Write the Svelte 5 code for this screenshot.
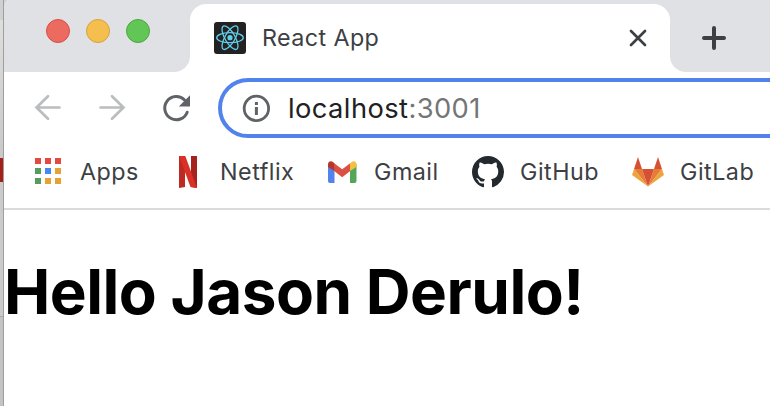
<script>
  const bookmarks = [
    { id: 'apps', label: 'Apps' },
    { id: 'netflix', label: 'Netflix' },
    { id: 'gmail', label: 'Gmail' },
    { id: 'github', label: 'GitHub' },
    { id: 'gitlab', label: 'GitLab' }
  ];
  const appColors = ['#e34a3f', '#e34a3f', '#e34a3f', '#559d5c', '#4688f1', '#e5a336', '#559d5c', '#e5a336', '#e5a336'];
</script>

<div class="screen">
  <div class="desktop">
    <span class="d1"></span><span class="d2"></span><span class="red"></span><span class="d3"></span><span class="d4"></span>
  </div>
  <div class="window">
    <header class="tabs">
      <div class="lights"><i class="close"></i><i class="min"></i><i class="max"></i></div>
      <div class="tab">
        <svg class="favicon" width="32" height="32" viewBox="0 0 32 32">
          <rect width="32" height="32" rx="3" fill="#222" />
          <g fill="none" stroke="#61cdec" stroke-width="1.3">
            <ellipse cx="16" cy="15.7" rx="13.3" ry="5" />
            <ellipse cx="16" cy="15.7" rx="13.3" ry="5" transform="rotate(60 16 15.7)" />
            <ellipse cx="16" cy="15.7" rx="13.3" ry="5" transform="rotate(120 16 15.7)" />
          </g>
          <circle cx="16" cy="15.7" r="2.6" fill="#61cdec" />
        </svg>
        <span class="title">React App</span>
        <svg class="x" width="20" height="20" viewBox="0 0 20 20"><path d="M3 3 17 17M17 3 3 17" stroke="#3c4043" stroke-width="2.7" stroke-linecap="round" /></svg>
      </div>
      <svg class="plus" width="26" height="26" viewBox="0 0 26 26"><path d="M13 3V23M3 13H23" stroke="#3c4043" stroke-width="4" stroke-linecap="round" /></svg>
    </header>
    <nav class="toolbar">
      <svg width="32" height="32" viewBox="0 0 32 32"><path d="M27.5 15.5H4.5M16 4.3 4.5 15.5 16 26.7" fill="none" stroke="#bbbcbe" stroke-width="2.7" stroke-linecap="round" /></svg>
      <svg width="32" height="32" viewBox="0 0 32 32"><path d="M4.5 15.5H27.5M16 4.3 27.5 15.5 16 26.7" fill="none" stroke="#bbbcbe" stroke-width="2.7" stroke-linecap="round" /></svg>
      <svg width="32" height="32" viewBox="0 0 32 32"><path d="M27.2 20.2A11.6 11.6 0 1 1 24.6 8" fill="none" stroke="#5f6368" stroke-width="3" stroke-linecap="round" /><path d="M30 3.2V14.4H18.8Z" fill="#5f6368" /></svg>
      <div class="address">
        <svg width="28" height="28" viewBox="0 0 28 28"><circle cx="14.4" cy="14.4" r="12.2" fill="none" stroke="#5f6368" stroke-width="2.8" /><path d="M12.9 8h3v3h-3zM12.9 13h3v8h-3z" fill="#5f6368" /></svg>
        <span class="url">localhost<span>:3001</span></span>
      </div>
    </nav>
    <div class="bookmarks">
      {#each bookmarks as b (b.id)}
        <div class="bookmark">
          <svg width="32" height="32" viewBox="0 0 32 32">
            {#if b.id === 'apps'}
              {#each appColors as color, i}
                <rect x={3 + (i % 3) * 10} y={2 + Math.floor(i / 3) * 10} width="6" height="6" fill={color} />
              {/each}
            {:else if b.id === 'netflix'}
              <path d="M7 0h6v31l-6 1z" fill="#bd2a22" />
              <path d="M19 0h6v32l-6-1z" fill="#a6231e" />
              <path d="M7 0h6.3L25 32l-6.5-1z" fill="#d93127" />
            {:else if b.id === 'gmail'}
              <path d="M2 8 8.5 12V27H4Q2 27 2 25Z" fill="#5282ec" />
              <path d="M24 12 30.5 8V25Q30.5 27 28.5 27H24Z" fill="#56a65a" />
              <path d="M8.2 7.3 16.2 13.2 24.2 7.3V15L16.2 21.2 8.2 15Z" fill="#db5040" />
              <path d="M2 11V8.2C2 5.5 5 4.2 7.2 6.2L8.5 7.5V15Z" fill="#b8352b" />
              <path d="M30.5 11V8.2C30.5 5.5 27.5 4.2 25.3 6.2L24 7.5V15Z" fill="#f2c042" />
            {:else if b.id === 'github'}
              <path transform="scale(2)" fill="#24292e" d="M8 0C3.58 0 0 3.58 0 8c0 3.54 2.29 6.53 5.47 7.59.4.07.55-.17.55-.38 0-.19-.01-.82-.01-1.49-2.01.37-2.53-.49-2.69-.94-.09-.23-.48-.94-.82-1.13-.28-.15-.68-.52-.01-.53.63-.01 1.08.58 1.23.82.72 1.21 1.87.87 2.33.66.07-.52.28-.87.51-1.07-1.78-.2-3.64-.89-3.64-3.95 0-.87.31-1.59.82-2.15-.08-.2-.36-1.02.08-2.12 0 0 .67-.21 2.2.82.64-.18 1.32-.27 2-.27s1.36.09 2 .27c1.53-1.04 2.2-.82 2.2-.82.44 1.1.16 1.92.08 2.12.51.56.82 1.27.82 2.15 0 3.07-1.87 3.75-3.65 3.95.29.25.54.73.54 1.48 0 1.07-.01 1.93-.01 2.2 0 .21.15.46.55.38A8.01 8.01 0 0 0 16 8c0-4.42-3.58-8-8-8Z" />
            {:else}
              <path d="M2 13 6 1 10 13ZM22 13 26 1 30 13Z" fill="#d65036" />
              <path d="M2 13H10L16 30.5ZM22 13H30L16 30.5Z" fill="#e87b35" />
              <path d="M2 13 0 19 16 30.5ZM30 13 32 19 16 30.5Z" fill="#eca43d" />
              <path d="M10 13H22L16 30.5Z" fill="#d65036" />
            {/if}
          </svg>
          <span>{b.label}</span>
        </div>
      {/each}
    </div>
    <main><h1>Hello Jason Derulo!</h1></main>
  </div>
</div>

<style>
  :global(body) { margin: 0; overflow: hidden; }
  .screen { width: 770px; height: 406px; display: flex; overflow: hidden; background: #d3d4d6; font-family: Inter, sans-serif; }
  .desktop { width: 4px; flex: none; display: flex; flex-direction: column; box-sizing: border-box; border-right: 1px solid #9e9e9e; }
  .d1 { height: 20px; background: #cfd0d2; }
  .d2 { height: 138px; background: linear-gradient(#dededc, #c9c9c9); }
  .red { height: 24px; background: #a42018; }
  .d3 { height: 134px; background: #cbcbcb; border-bottom: 1px solid #aaa; }
  .d4 { flex: 1; background: #c4c4c4; }
  .window { width: 766px; flex: none; background: #fff; border-top-left-radius: 5px 10px; overflow: hidden; }
  .tabs { height: 72px; background: #dfe1e5; display: flex; }
  .lights { display: flex; gap: 16px; padding: 19px 0 0 42px; width: 144px; flex: none; }
  .lights i { width: 24px; height: 24px; box-sizing: border-box; border-radius: 50%; border: 1px solid; }
  .lights .close { background: #ec6b60; border-color: #d84f48; }
  .lights .min { background: #f5bf50; border-color: #d9a13c; }
  .lights .max { background: #62c656; border-color: #4ba83e; }
  .tab { position: relative; width: 480px; height: 68px; margin-top: 4px; box-sizing: border-box; padding: 0 22px 0 24px; flex: none; display: flex; align-items: center; background: #fff; border-radius: 16px 16px 0 0; }
  .tab::before, .tab::after { content: ''; position: absolute; bottom: 0; width: 16px; height: 16px; }
  .tab::before { left: -16px; background: radial-gradient(circle at 0 0, transparent 15.5px, #fff 16.5px); }
  .tab::after { right: -16px; background: radial-gradient(circle at 100% 0, transparent 15.5px, #fff 16.5px); }
  .title { margin-left: 16px; padding-bottom: 2px; font-size: 23.3px; color: #3c4043; flex: 1; white-space: nowrap; letter-spacing: 0.4px; }
  .plus { margin: 25px 0 0 31px; }
  .toolbar { height: 60px; padding: 6px 0 0 28px; display: flex; align-items: center; gap: 32px; }
  .toolbar > svg { flex: none; }
  .address { margin-left: -6px; flex: none; width: 620px; height: 60px; box-sizing: border-box; border: 4px solid #5283ec; border-radius: 30px; display: flex; align-items: center; padding-left: 20px; }
  .url { margin-left: 18px; font-size: 27.3px; color: #202124; white-space: nowrap; letter-spacing: 0.42px; }
  .url span { color: #757575; }
  .bookmarks { height: 72px; box-sizing: border-box; border-bottom: 2px solid #dadbdc; padding: 0 0 2px 28px; display: grid; grid-template-columns: 140px 154px 146px 160px 150px; align-items: center; }
  .bookmark { display: flex; align-items: center; gap: 16px; font-size: 23.3px; letter-spacing: 0.5px; color: #3c4043; white-space: nowrap; }
  .bookmark span { padding-bottom: 2px; }
  h1 { margin: 41px 0 0; font-size: 62px; line-height: 82px; font-weight: 700; letter-spacing: -0.5px; color: #000; white-space: nowrap; }
</style>
